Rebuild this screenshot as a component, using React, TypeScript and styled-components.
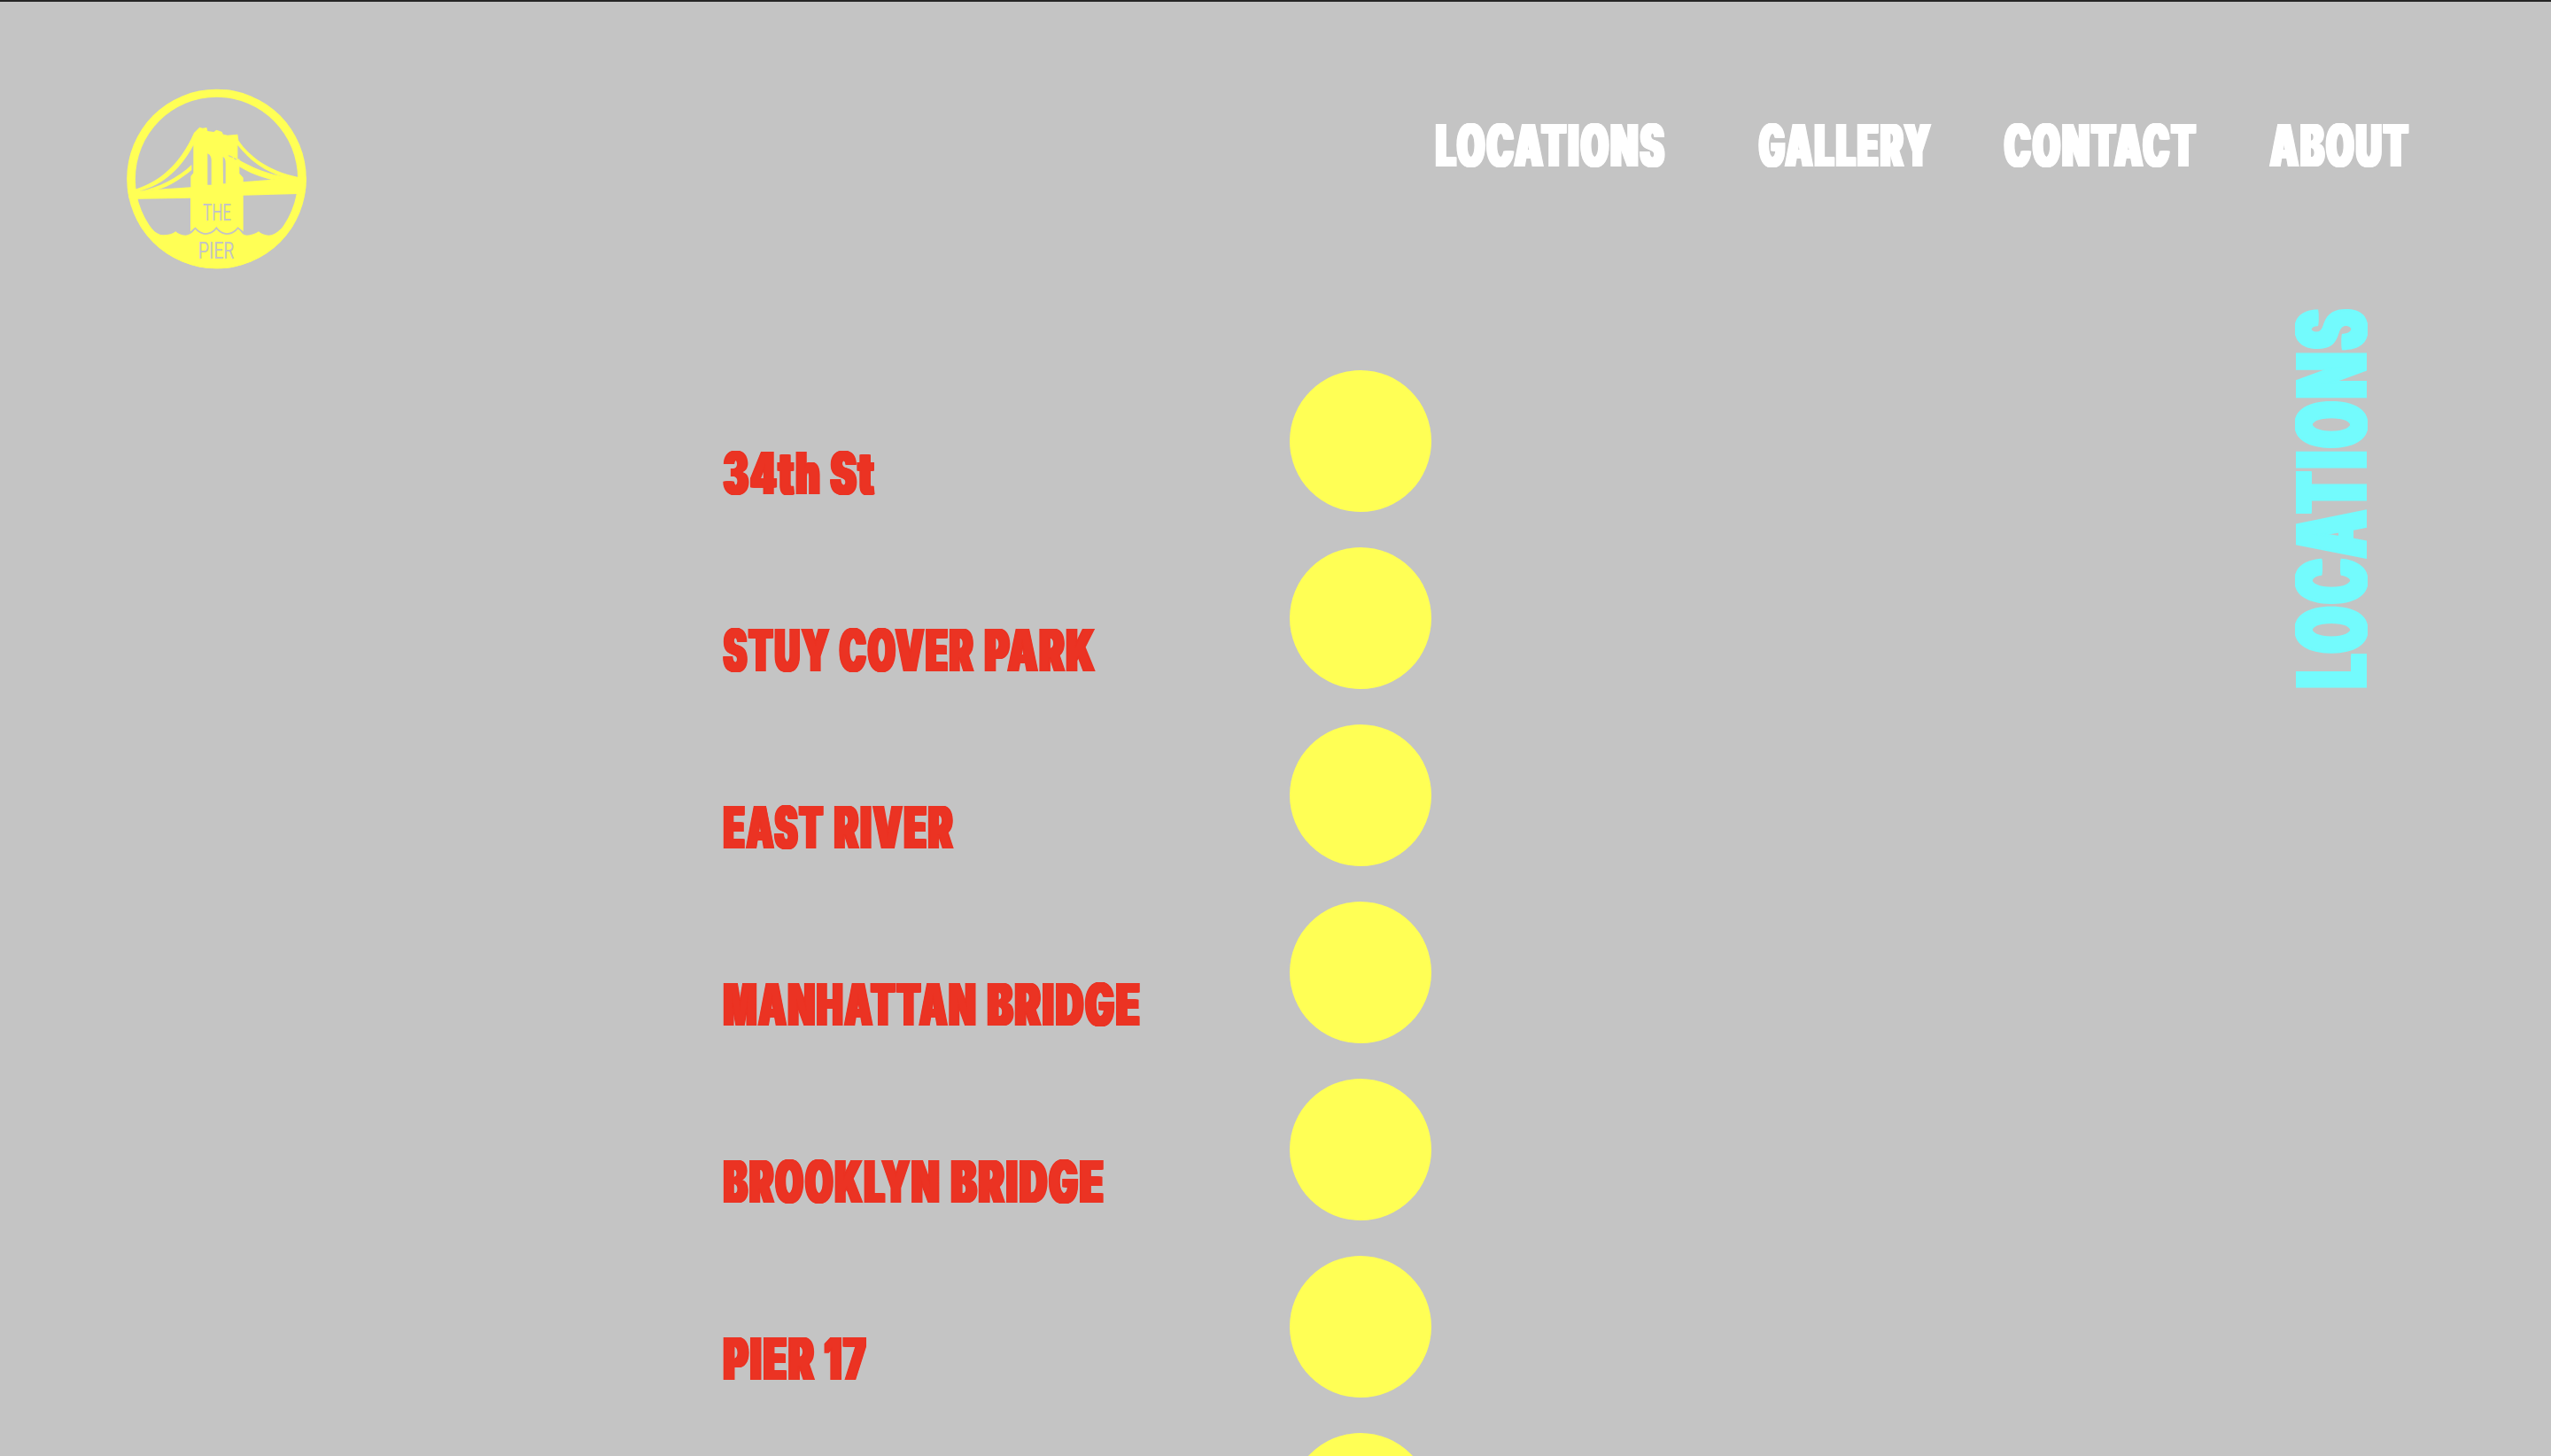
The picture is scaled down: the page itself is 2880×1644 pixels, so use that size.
import React, { Fragment, useLayoutEffect, useRef, useState } from "react";
import styled, { createGlobalStyle } from "styled-components";

const GREY = "#c4c4c4";
const YELLOW = "#ffff55";
const RED = "#eb3323";
const CYAN = "#73fbfd";

const GlobalStyle = createGlobalStyle`
  * { box-sizing: border-box; }
  html, body { margin: 0; padding: 0; background: ${GREY}; overflow: hidden; }
`;

const Page = styled.div`
  height: 100vh;
  overflow: hidden;
  border-top: 2px solid #262626;
  background: ${GREY};
  font-family: Inter, "Liberation Sans", sans-serif;
  font-weight: 900;
  display: flex;
  flex-direction: column;
`;

const Header = styled.header`
  flex: none;
  height: 314px;
  padding: 88px 159px 0 130px;
  display: flex;
  justify-content: space-between;
  align-items: flex-start;
`;

const Nav = styled.nav`
  display: flex;
  padding-top: 41px;
  color: #ffffff;
`;

const NavLink = styled.a<{ $gap: number }>`
  margin-left: ${(p) => p.$gap}px;
  color: inherit;
  text-decoration: none;
`;

const Main = styled.main`
  flex: 1;
  min-height: 0;
  display: flex;
  align-items: flex-start;
  padding-left: 817px;
  padding-right: 193px;
`;

const Stops = styled.ul`
  list-style: none;
  margin: 0;
  padding: 102px 0 0;
  width: 799px;
`;

const Stop = styled.li`
  display: flex;
  align-items: flex-start;
  height: 200px;
`;

const StopName = styled.div`
  display: flex;
  padding-top: 83px;
  color: ${RED};
`;

const Dot = styled.div`
  flex: none;
  width: 160px;
  height: 160px;
  margin-left: auto;
  border-radius: 50%;
  background: ${YELLOW};
`;

const Side = styled.aside`
  margin-left: auto;
  padding-top: 30px;
`;

const Title = styled.h1`
  margin: 0;
  width: 110px;
  height: 431px;
  font-size: 110px;
  font-weight: inherit;
  color: ${CYAN};
  transform: translateY(431px) rotate(-90deg);
  transform-origin: 0 0;
`;

const WordBox = styled.span<{ $w: number; $gap: number; $size: number }>`
  display: block;
  flex: none;
  width: ${(p) => p.$w}px;
  height: ${(p) => p.$size}px;
  margin-left: ${(p) => p.$gap}px;
  font-size: ${(p) => p.$size}px;
  line-height: ${(p) => p.$size}px;
`;

const Glyphs = styled.span<{ $spread: number; $track: number }>`
  display: inline-block;
  white-space: nowrap;
  transform-origin: 0 0;
  letter-spacing: ${(p) => p.$track}em;
  text-shadow: ${(p) =>
    [0.25, 0.5, 0.75, 1]
      .map((k) => `${k * p.$spread}em 0 0 currentColor, ${-k * p.$spread}em 0 0 currentColor`)
      .join(", ")};
`;

type WordProps = {
  text: string;
  w: number;
  gap?: number;
  size?: number;
  spread?: number;
  track?: number;
};

/* Condenses the heavy face until the word fills the given measure. */
function Word({ text, w, gap = 0, size = 66, spread = 0.052, track = 0.065 }: WordProps) {
  const ref = useRef<HTMLSpanElement>(null);
  const [scale, setScale] = useState(1);
  useLayoutEffect(() => {
    const el = ref.current;
    if (el) setScale(w / el.offsetWidth);
  }, [text, w]);
  return (
    <WordBox $w={w} $gap={gap} $size={size}>
      <Glyphs ref={ref} $spread={spread} $track={track} style={{ transform: `scaleX(${scale})` }}>
        {text}
      </Glyphs>
    </WordBox>
  );
}

const NAV = [
  { text: "LOCATIONS", w: 260, gap: 0 },
  { text: "GALLERY", w: 196, gap: 105 },
  { text: "CONTACT", w: 218, gap: 81 },
  { text: "ABOUT", w: 158, gap: 82 },
];

const STOPS: WordProps[][] = [
  [{ text: "34th", w: 111 }, { text: "St", w: 51, gap: 10 }],
  [{ text: "STUY", w: 121 }, { text: "COVER", w: 153, gap: 10 }, { text: "PARK", w: 126, gap: 11 }],
  [{ text: "EAST", w: 114 }, { text: "RIVER", w: 136, gap: 11 }],
  [{ text: "MANHATTAN", w: 287 }, { text: "BRIDGE", w: 174, gap: 11 }],
  [{ text: "BROOKLYN", w: 246 }, { text: "BRIDGE", w: 174, gap: 11 }],
  [{ text: "PIER", w: 104 }, { text: "17", w: 49, gap: 10 }],
  [],
];

const LogoSvg = styled.svg`
  display: block;
  width: 230px;
  height: 225px;
`;

const WAVES =
  "M120 500Q142 526 164 526Q190 526 205 514Q216 526 238 527Q254 526 266 512L271 505Q288 524 307 524Q330 523 343 504Q357 524 380 524Q402 523 415 503L425 513Q432 527 446 527Q470 526 486 514Q498 526 520 527Q540 526 560 506";

function Logo() {
  return (
    <LogoSvg viewBox="0 0 690 675">
      <defs>
        <clipPath id="disc">
          <circle cx="343.5" cy="336" r="303.5" />
        </clipPath>
      </defs>
      <circle cx="343.5" cy="336" r="304" fill={YELLOW} />
      <ellipse cx="343.5" cy="337" rx="275" ry="278" fill={GREY} />
      <g clipPath="url(#disc)">
        <path fill={YELLOW} d={`${WAVES}L640 480V675H40V480Z`} />
        <path
          fill={YELLOW}
          d="M40 376L68 371C150 345 218 290 267 180L286 161L296 164L310 162L313 174L334 177L343 170L361 176L366 185L380 188L415 185L418 206C455 260 520 308 617 329L660 330V386L434 392V517L418 503Q400 521 380 521Q357 520 343 501Q330 520 307 521Q288 520 271 501L255 515V401L40 405Z"
        />
        <path fill={GREY} d="M265 222C225 298 165 356 83 377L145 371L256 364V327L265 316Z" />
        <path fill={YELLOW} d="M80 378C150 366 215 330 259 288V306C222 336 188 360 143 373Z" />
        <path fill={GREY} d="M415 222C455 272 505 312 575 331L530 338L434 346V332L421 318V268L415 270Z" />
        <path
          fill={YELLOW}
          d="M384 256L411 266C460 296 515 320 590 331L530 339C490 330 455 316 421 295L406 285Z"
        />
      </g>
      <path fill={GREY} d="M313 250Q326 256 326 275V356H313Z" />
      <path fill={GREY} d="M365 261Q374 266 374 282V352H366Z" />
      <path stroke={GREY} strokeWidth="3" fill="none" d="M384 257L398 263M402 266L411 270" />
      <path
        stroke={GREY}
        strokeWidth="5"
        fill="none"
        d="M256 517L271 503Q288 522 307 522Q330 521 343 502Q357 522 380 522Q402 521 416 502L434 517"
      />
      <g fill={GREY} fontFamily="Roboto, sans-serif" fontSize="76" fontWeight="400">
        <text x="297" y="477" textLength="96" lengthAdjust="spacingAndGlyphs">
          THE
        </text>
        <text x="281" y="607" textLength="122" lengthAdjust="spacingAndGlyphs">
          PIER
        </text>
      </g>
    </LogoSvg>
  );
}

export default function App() {
  return (
    <>
      <GlobalStyle />
      <Page>
        <Header>
          <Logo />
          <Nav>
            {NAV.map((n) => (
              <NavLink key={n.text} $gap={n.gap}>
                <Word text={n.text} w={n.w} />
              </NavLink>
            ))}
          </Nav>
        </Header>
        <Main>
          <Stops>
            {STOPS.map((words, i) => (
              <Stop key={i}>
                <StopName>
                  {words.map((word) => (
                    <Fragment key={word.text}>
                      <Word {...word} />{" "}
                    </Fragment>
                  ))}
                </StopName>
                <Dot />
              </Stop>
            ))}
          </Stops>
          <Side>
            <Title>
              <Word text="LOCATIONS" w={431} size={110} spread={0.043} track={0.06} />
            </Title>
          </Side>
        </Main>
      </Page>
    </>
  );
}
